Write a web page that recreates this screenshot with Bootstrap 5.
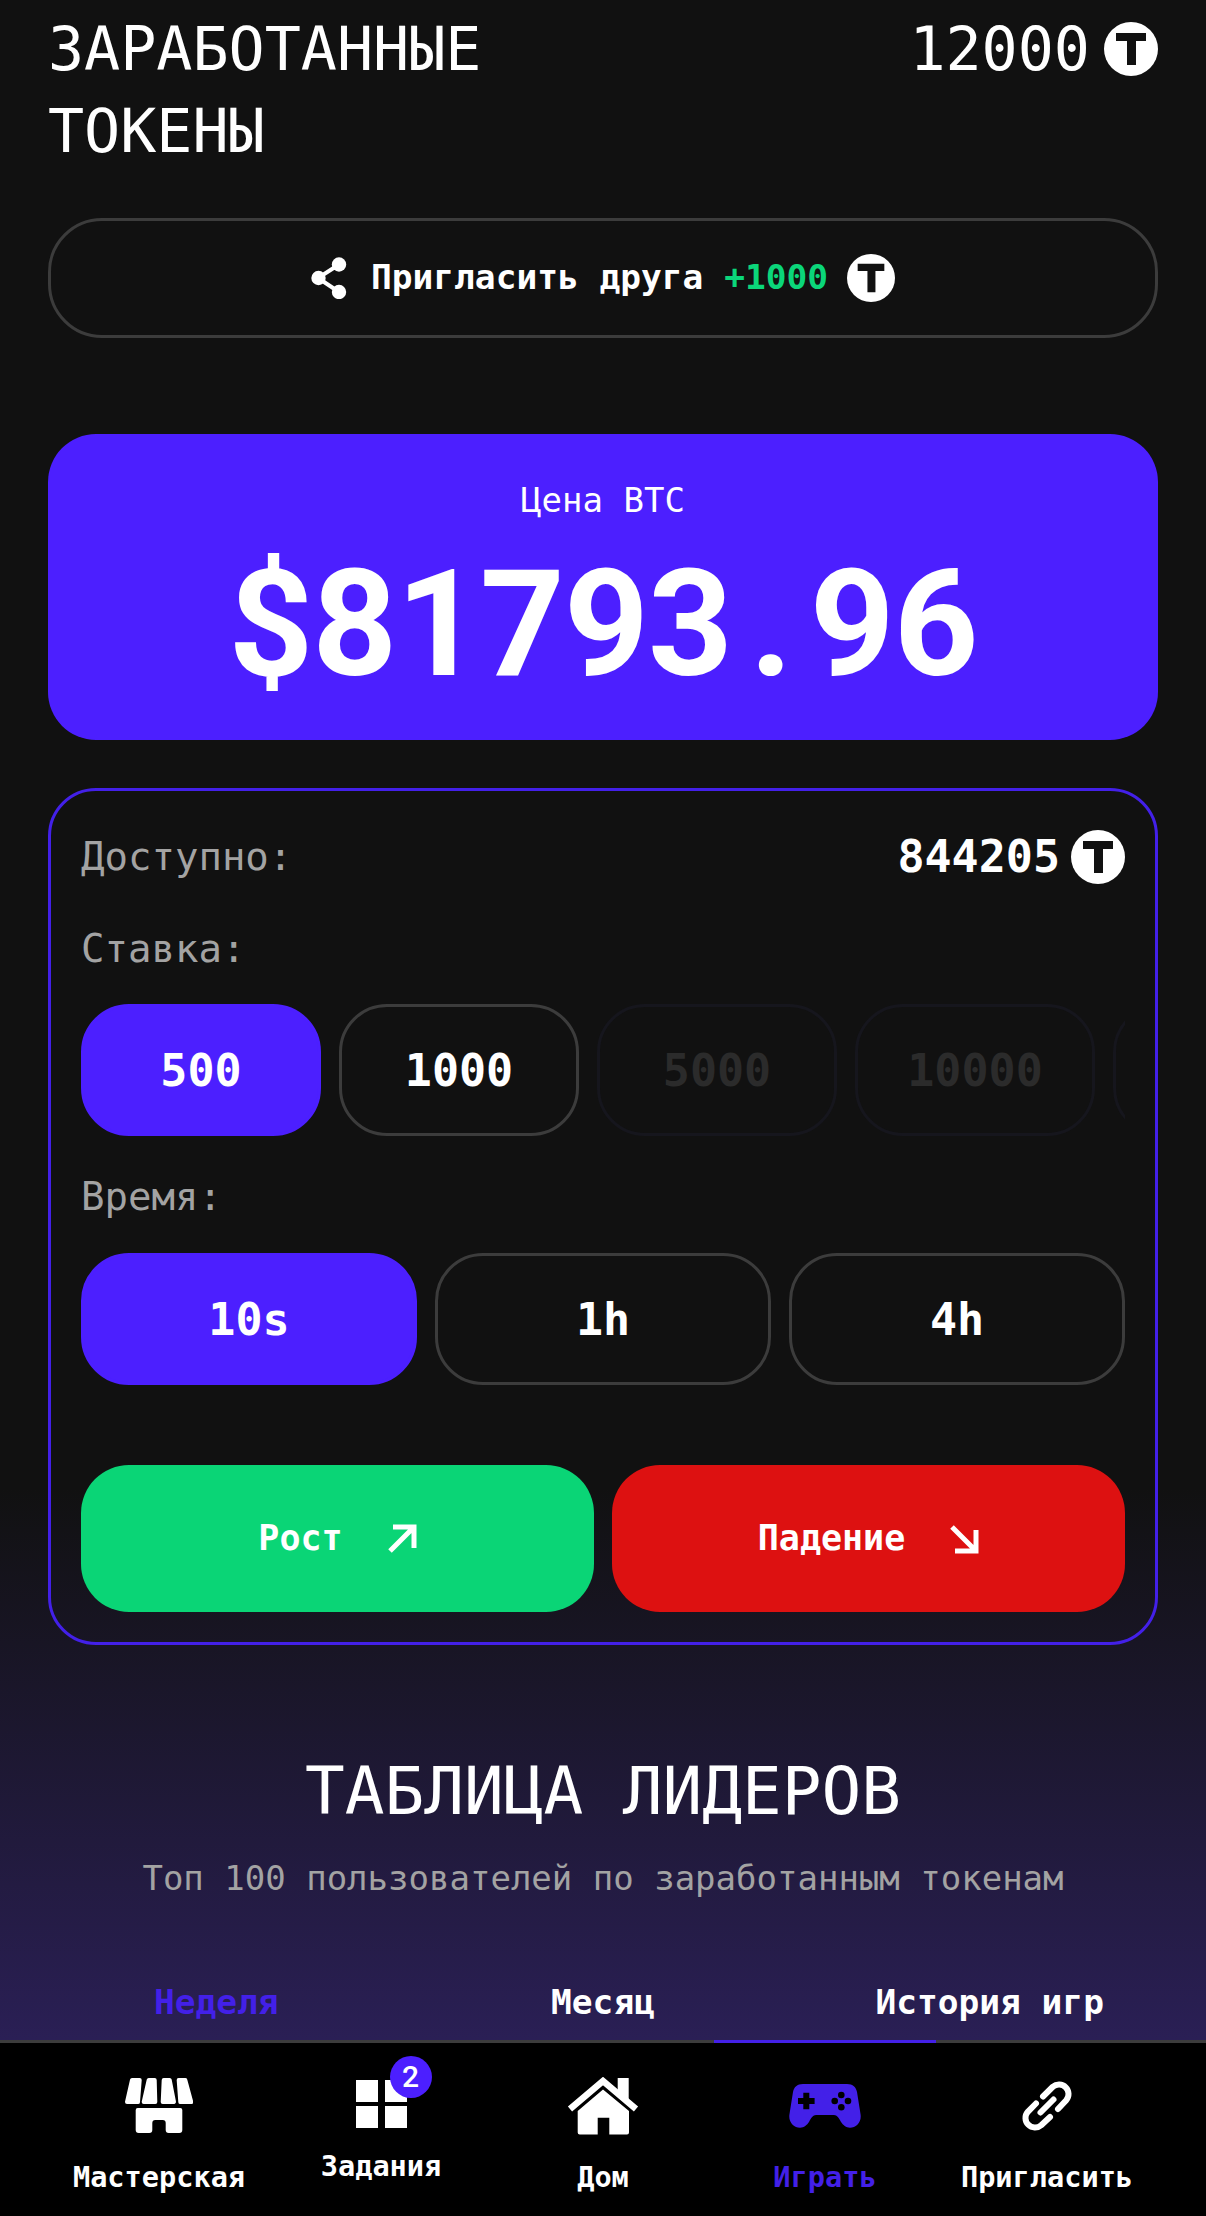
<!DOCTYPE html>
<html lang="ru">
<head>
<meta charset="utf-8">
<title>Играть</title>
<link href="https://cdn.jsdelivr.net/npm/bootstrap@5.3.0/dist/css/bootstrap.min.css" rel="stylesheet">
<style>
html,body{background:#000;}
body{font-family:"DejaVu Sans Mono","Liberation Mono",monospace;color:#fff;width:1206px;height:2216px;overflow:hidden;}
.shell{height:2216px;}
.stage{height:2040px;overflow:hidden;padding:8px 48px 0;background:linear-gradient(180deg,#111 0,#111 73%,#2a1f55 100%);}
.toptitle{font-size:60px;line-height:82px;width:640px;}
.coin{display:block;flex:none;}
.toptotal{font-size:60px;line-height:82px;gap:14px;}
.invite{margin-top:46px;height:120px;border:3px solid #3c3c3c;border-radius:54px;font-size:34.5px;font-weight:700;}
.inviteshare{margin-right:24px;}
.invitecoin{margin-left:19px;}
.plus{color:#0bd67a;}
.pricebox{margin-top:96px;height:306px;background:#4c1fff;border-radius:48px;padding-top:45px;}
.pricelabel{font-size:34px;line-height:42px;}
.priceval{font-family:"Roboto","Liberation Sans",sans-serif;font-weight:700;font-size:148px;line-height:176px;letter-spacing:-1px;margin-top:16px;}
.pricedot{padding:0 18px;}
.panel{margin-top:48px;height:857px;border:3px solid #4320e8;border-radius:48px;padding:36px 30px 30px;}
.grey{color:#a3a3a3;font-size:39px;line-height:60px;}
.avail{font-size:45px;font-weight:700;line-height:54px;gap:11px;}
.stakes{gap:18px;overflow:hidden;margin-top:25px;}
.pick{height:132px;border:3px solid #3c3c3c;border-radius:48px;color:#fff;font-size:45px;font-weight:700;flex:none;display:flex;align-items:center;justify-content:center;padding:2px 0 0;background:transparent;}
.pick.active{background:#4c1fff;border-color:#4c1fff;color:#fff;}
.pick.w-stake{width:240px;}
.pick.off{color:#2b2b2b;border-color:#16161d;opacity:1;}
.timehead{margin-top:31px;}
.times{gap:18px;margin-top:26px;}
.times .pick{flex:1 1 0;}
.actions{gap:18px;margin-top:80px;}
.act{flex:1 1 0;height:147px;border:0;border-radius:48px;color:#fff;font-size:35px;font-weight:700;display:flex;align-items:center;justify-content:center;gap:44px;padding:0;}
.act.up{background:#0ad576;}
.act.down{background:#dd1111;}
.leaders{margin-top:105px;text-align:center;}
.leadhead{font-size:66px;line-height:84px;margin:0;font-weight:400;}
.leadsub{font-size:34px;line-height:44px;color:#a3a3a3;margin:22px 0 0;}
.tabsrow{margin:78px -25px 0;}
.tabsrow .nav-link{flex:1 1 0;padding:0;color:#fff;font-size:34.5px;font-weight:700;line-height:48px;}
.tabsrow .nav-link.active{color:#4320e8;background:none;}
.dock{height:176px;background:#000;border-top:3px solid #3c3c3c;padding:0 48px;}
.dockitem{width:222px;height:173px;position:relative;text-align:center;font-size:28.600px;font-weight:700;line-height:36px;color:#fff;text-decoration:none;display:block;}
.dockitem.on{color:#4320e8;}
.dockitem.on::before{content:"";position:absolute;left:0;right:0;top:-3px;height:3px;background:#4320e8;}
.dockicon{height:116px;padding-top:9px;display:flex;align-items:center;justify-content:center;position:relative;}
.dockicon svg{display:block;}
.i-tasks{position:relative;width:51px;height:48px;margin-top:-2px;}
.taskpip{position:absolute;left:34px;top:-24px;width:42px;height:42px;border-radius:50%;background:#4c1fff;color:#fff;font-family:Roboto,sans-serif;font-size:30px;font-weight:500;line-height:42px;}
.dockitem.tight .dockicon{height:105px;padding-top:19px;}
</style>
</head>
<body>
<div class="shell d-flex flex-column">
<main class="stage">
  <div class="d-flex justify-content-between align-items-start">
    <div class="toptitle">ЗАРАБОТАННЫЕ ТОКЕНЫ</div>
    <div class="d-flex align-items-center toptotal">
      <span>12000</span>
      <svg class="coin" width="54" height="54" viewBox="0 0 54 54"><circle cx="27" cy="27" r="27" fill="#fff"/><path fill="#111" d="M12 11h30v8H32v24h-9V19H12z"/></svg>
    </div>
  </div>

  <div class="invite d-flex align-items-center justify-content-center">
    <svg class="inviteshare" width="36" height="42" viewBox="0 0 36 42"><path d="M28 7.500 7 21l21 14" fill="none" stroke="#fff" stroke-width="4"/><circle cx="28" cy="7.500" r="7.200" fill="#fff"/><circle cx="7.500" cy="21" r="7.200" fill="#fff"/><circle cx="28" cy="35" r="7.200" fill="#fff"/></svg>
    <span>Пригласить друга <span class="plus">+1000</span></span>
    <svg class="coin invitecoin" width="48" height="48" viewBox="0 0 54 54"><circle cx="27" cy="27" r="27" fill="#fff"/><path fill="#111" d="M12 11h30v8H32v24h-9V19H12z"/></svg>
  </div>

  <div class="pricebox text-center">
    <div class="pricelabel">Цена BTC</div>
    <div class="priceval">$81793<span class="pricedot">.</span>96</div>
  </div>

  <section class="panel">
    <div class="d-flex justify-content-between align-items-center">
      <span class="grey">Доступно:</span>
      <span class="d-flex align-items-center avail">844205
        <svg class="coin" width="54" height="54" viewBox="0 0 54 54"><circle cx="27" cy="27" r="27" fill="#fff"/><path fill="#111" d="M12 11h30v8H32v24h-9V19H12z"/></svg>
      </span>
    </div>
    <div class="grey mt-4 pt-2">Ставка:</div>
    <div class="stakes d-flex flex-nowrap">
      <button type="button" class="btn pick w-stake active">500</button>
      <button type="button" class="btn pick w-stake">1000</button>
      <button type="button" class="btn pick w-stake off">5000</button>
      <button type="button" class="btn pick w-stake off">10000</button>
      <button type="button" class="btn pick w-stake off"></button>
    </div>
    <div class="grey timehead">Время:</div>
    <div class="times d-flex">
      <button type="button" class="btn pick active">10s</button>
      <button type="button" class="btn pick">1h</button>
      <button type="button" class="btn pick">4h</button>
    </div>
    <div class="actions d-flex">
      <button type="button" class="btn act up">Рост
        <svg width="30" height="30" viewBox="0 0 30 30"><path d="M3 27 26 4M6 3h21v21" fill="none" stroke="#fff" stroke-width="5"/></svg>
      </button>
      <button type="button" class="btn act down">Падение
        <svg width="30" height="30" viewBox="0 0 30 30"><path d="M3 3l23 23M6 27h21V6" fill="none" stroke="#fff" stroke-width="5"/></svg>
      </button>
    </div>
  </section>

  <section class="leaders">
    <h2 class="leadhead">ТАБЛИЦА ЛИДЕРОВ</h2>
    <p class="leadsub">Топ 100 пользователей по заработанным токенам</p>
    <nav class="nav tabsrow">
      <a class="nav-link active" href="#">Неделя</a>
      <a class="nav-link" href="#">Месяц</a>
      <a class="nav-link" href="#">История игр</a>
    </nav>
  </section>
</main>

<nav class="dock d-flex">
  <a class="dockitem" href="#">
    <div class="dockicon"><svg width="68" height="55" viewBox="0 0 68 55"><g fill="#fff" stroke="#fff" stroke-width="4" stroke-linejoin="round"><path d="M7 2h7.700L13 24H2z"/><path d="M23.700 2h6l.6 22H18.700z"/><path d="M38.700 2h6L49 24H37.700z"/><path d="M53.700 2h6.600l6 22h-11z"/></g><path fill="#fff" d="M12.700 30h42.600a2 2 0 0 1 2 2v20a3 3 0 0 1-3 3H43.700a3 3 0 0 1-3-3v-7a3 3 0 0 0-3-3h-7.400a3 3 0 0 0-3 3v7a3 3 0 0 1-3 3H13.700a3 3 0 0 1-3-3V32a2 2 0 0 1 2-2z"/></svg></div>
    <div>Мастерская</div>
  </a>
  <a class="dockitem tight" href="#">
    <div class="dockicon"><div class="i-tasks"><svg width="51" height="48" viewBox="0 0 51 48"><path fill="#fff" d="M0 0h22v22H0zM29 0h22v22H29zM0 26h22v22H0zM29 26h22v22H29z"/></svg><span class="taskpip">2</span></div></div>
    <div>Задания</div>
  </a>
  <a class="dockitem" href="#">
    <div class="dockicon"><svg width="72" height="58" viewBox="0 0 72 58"><path fill="#fff" d="M50.700 1h11v24l-11-9z"/><path d="M3 32 36 4l33 28" fill="none" stroke="#fff" stroke-width="6.500"/><path fill="#fff" d="M36 12.500 62 34v21.500a2 2 0 0 1-2 2H42.300V40.700H30.700v16.800H12.700a2 2 0 0 1-2-2V34z"/></svg></div>
    <div>Дом</div>
  </a>
  <a class="dockitem on" href="#">
    <div class="dockicon"><svg width="72" height="44" viewBox="0 0 72 44"><path fill="#4320e8" d="M14 0h44c6 0 9 3 10 8l3.500 22c1.500 8-4.500 13.700-10.500 13.700-4 0-7-2.700-9-5.700-2-4-4-7-7-7H27c-3 0-5 3-7 7-2 3-5 5.700-9 5.700-6 0-12-5.700-10.500-13.700L4 8c1-5 4-8 10-8z"/><path fill="#000" d="M14.300 8.700h6v5.300h5.300v6h-5.300v5.300h-6V20H9v-6h5.300z"/><circle cx="52.300" cy="11" r="3.300"/><circle cx="45.700" cy="17" r="3.300"/><circle cx="59" cy="17" r="3.300"/><circle cx="52.300" cy="23.300" r="3.300"/></svg></div>
    <div>Играть</div>
  </a>
  <a class="dockitem" href="#">
    <div class="dockicon"><svg width="50" height="50" viewBox="0 0 50 50"><path d="M21 15.500l9.800-9.700a9.500 9.500 0 0 1 13.400 13.400L36 28M14 22.500l-8.200 8.300a9.500 9.500 0 0 0 13.400 13.400L28 36M18.500 31.500l13-13" fill="none" stroke="#fff" stroke-width="6" stroke-linecap="round"/></svg></div>
    <div>Пригласить</div>
  </a>
</nav>
</div>
</body>
</html>
